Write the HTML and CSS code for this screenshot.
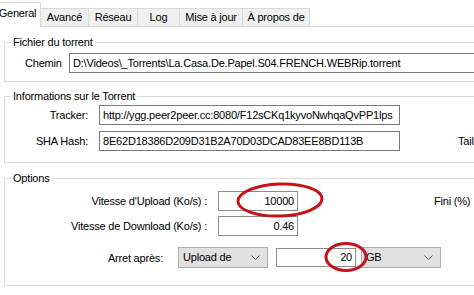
FILE: index.html
```html
<!DOCTYPE html>
<html>

<head>
    <meta name="viewport" content="width=device-width, initial-scale=1.0">
    <title>Propriétés du torrent</title>
    <link rel="stylesheet" href="styles.css">
</head>

<body>
    <div class="tabs">
        <div class="tab active t-general">General</div>
        <div class="tab t-avance">Avancé</div>
        <div class="tab t-reseau">Réseau</div>
        <div class="tab t-log">Log</div>
        <div class="tab t-maj">Mise à jour</div>
        <div class="tab t-apropos">À propos de</div>
    </div>

    <div class="panel">
        <fieldset class="group">
            <legend>Fichier du torrent</legend>
            <div class="file-row">
                <span class="lbl-path">Chemin</span>
                <div class="field path">D:\Videos\_Torrents\La.Casa.De.Papel.S04.FRENCH.WEBRip.torrent</div>
            </div>
        </fieldset>

        <fieldset class="group g-info">
            <legend>Informations sur le Torrent</legend>
            <div class="info-grid">
                <span class="lbl">Tracker:</span>
                <div class="field">http://ygg.peer2peer.cc:8080/F12sCKq1kyvoNwhqaQvPP1lps</div>
                <span></span>
                <span class="lbl">SHA Hash:</span>
                <div class="field">8E62D18386D209D31B2A70D03DCAD83EE8BD113B</div>
                <span class="side">Tail</span>
            </div>
        </fieldset>

        <fieldset class="group g-opts">
            <legend>Options</legend>
            <div class="opt-row">
                <span class="lbl opt-lbl">Vitesse d'Upload (Ko/s) :</span>
                <div class="mark-wrap">
                    <div class="field num">10000</div>
                    <svg class="mark mark-up" width="90" height="38" viewBox="0 0 90 38">
                        <ellipse cx="45" cy="19" rx="42" ry="16" transform="rotate(-2 45 19)" />
                    </svg>
                </div>
                <span class="fini">Fini (%)</span>
            </div>
            <div class="opt-row">
                <span class="lbl opt-lbl">Vitesse de Download (Ko/s) :</span>
                <div class="field num">0.46</div>
            </div>
            <div class="opt-row stop-row">
                <span class="lbl stop-lbl">Arret après:</span>
                <div class="combo c-mode">Upload de
                    <svg class="chev" width="9" height="5" viewBox="0 0 9 5"><polyline points="0.5,0.5 4.5,4.5 8.5,0.5" /></svg>
                </div>
                <div class="mark-wrap">
                    <div class="field num amount">20</div>
                    <svg class="mark mark-amt" width="46" height="32" viewBox="0 0 46 32">
                        <ellipse cx="23" cy="16" rx="20" ry="13.5" />
                    </svg>
                </div>
                <div class="combo c-unit">GB
                    <svg class="chev" width="9" height="5" viewBox="0 0 9 5"><polyline points="0.5,0.5 4.5,4.5 8.5,0.5" /></svg>
                </div>
            </div>
        </fieldset>

        <fieldset class="group g-next">
            <legend>Commande</legend>
        </fieldset>
    </div>
</body>

</html>
```

FILE: styles.css
```css
body {
    margin: 0;
    width: 474px;
    height: 295px;
    overflow: hidden;
    background: #ffffff;
    color: #000000;
    font-family: "Liberation Sans", Arial, sans-serif;
    font-size: 11px;
    letter-spacing: -0.2px;
}

/* tab strip */

.tabs {
    display: flex;
    align-items: flex-end;
    height: 26px;
    margin-left: -6px;
    border-bottom: 1px solid #d9d9d9;
}

.tab {
    box-sizing: border-box;
    height: 18px;
    line-height: 17px;
    text-align: center;
    background: #f0f0f0;
    border: 1px solid #d9d9d9;
    border-bottom: none;
    margin-left: -1px;
}

.tab.active {
    position: relative;
    height: 25px;
    line-height: 21px;
    margin-bottom: -1px;
    background: #ffffff;
    z-index: 1;
}

.t-general { width: 47px; margin-left: 0; }
.t-avance { width: 49px; }
.t-reseau { width: 50px; }
.t-log { width: 43px; }
.t-maj { width: 64px; }
.t-apropos { width: 68px; }

/* group boxes */

.panel {
    padding: 8px 0 0 4px;
}

.group {
    width: 540px;
    margin: 0;
    padding: 0;
    border: 1px solid #dcdcdc;
}

.group legend {
    margin-left: 6px;
    padding: 0 2px;
    line-height: 14px;
}

.field {
    box-sizing: border-box;
    height: 20px;
    line-height: 18px;
    padding: 0 3px;
    border: 1px solid #7a7a7a;
    background: #ffffff;
    white-space: nowrap;
    overflow: hidden;
}

.lbl {
    text-align: right;
}

.file-row {
    display: flex;
    align-items: center;
    padding: 4px 0 8px 20px;
}

.lbl-path {
    width: 44px;
}

.field.path {
    width: 470px;
}

.g-info {
    margin-top: 7px;
}

.info-grid {
    display: grid;
    grid-template-columns: 83px 301px auto;
    column-gap: 11px;
    row-gap: 6px;
    align-items: center;
    padding: 2px 0 11px 0;
}

.side {
    padding-left: 47px;
}

.g-opts {
    margin-top: 8px;
    padding: 6px 0 17px 0;
}

.opt-row {
    display: flex;
    align-items: center;
    margin-bottom: 5px;
}

.opt-lbl {
    width: 202px;
    margin-right: 11px;
}

.field.num {
    width: 80px;
    text-align: right;
    border-color: #8c8c8c;
}

.fini {
    margin-left: 136px;
}

.stop-row {
    margin: 11px 0 0 0;
}

.stop-lbl {
    width: 158px;
    margin-right: 15px;
}

.combo {
    position: relative;
    box-sizing: border-box;
    height: 21px;
    line-height: 19px;
    padding-left: 4px;
    background: #e1e1e1;
    border: 1px solid #adadad;
}

.c-mode {
    width: 90px;
    margin-right: 8px;
}

.c-unit {
    width: 80px;
    margin-left: 5px;
}

.chev {
    position: absolute;
    right: 7px;
    top: 7px;
    fill: none;
    stroke: #5a5a5a;
    stroke-width: 1;
}

.field.amount {
    width: 80px;
    height: 19px;
    line-height: 17px;
}

/* red annotation circles drawn over the screenshot */

.mark-wrap {
    position: relative;
}

.mark {
    position: absolute;
    z-index: 2;
    fill: none;
    stroke: #c4131b;
    stroke-width: 3;
}

.mark-up {
    left: 17px;
    top: -10px;
}

.mark-amt {
    left: 47px;
    top: -7px;
}

/* next group, only its top shows above the window edge */

.g-next {
    margin-top: 7px;
    height: 30px;
}
```
